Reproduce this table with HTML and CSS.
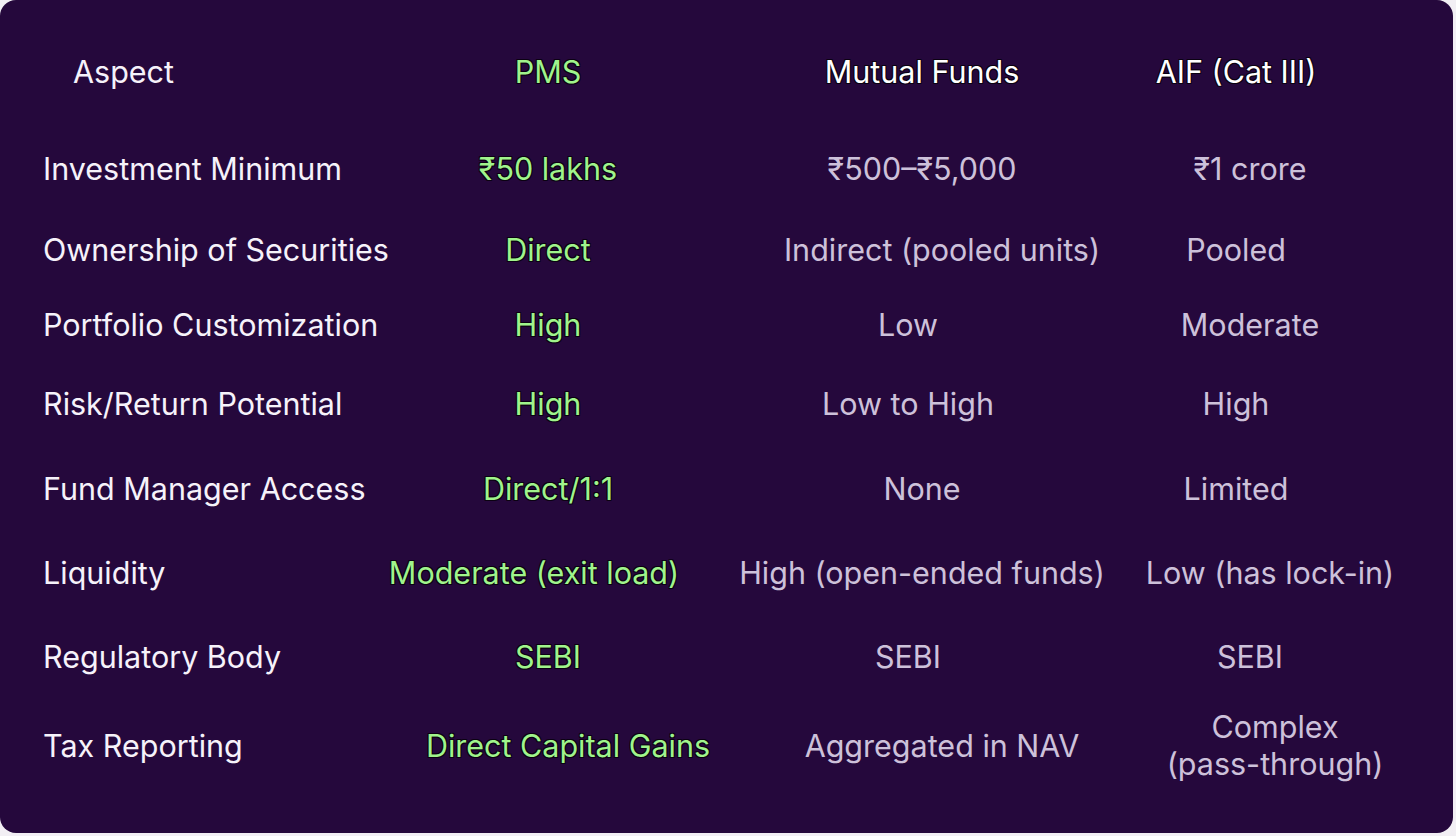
FILE: index.html
```html
<!DOCTYPE html>
<html lang="en">
<head>
<meta charset="utf-8">
<title>PMS vs Mutual Funds vs AIF</title>
<link rel="stylesheet" href="styles.css">
</head>
<body>
<div class="card">
  <div class="table">
    <div class="label head-label">Aspect</div>
    <div class="cell head green">PMS</div>
    <div class="cell head white">Mutual Funds</div>
    <div class="cell head white nudge-left">AIF (Cat III)</div>

    <div class="label">Investment Minimum</div>
    <div class="cell green">₹50 lakhs</div>
    <div class="cell gray">₹500–₹5,000</div>
    <div class="cell gray">₹1 crore</div>

    <div class="label">Ownership of Securities</div>
    <div class="cell green">Direct</div>
    <div class="cell gray nudge-right">Indirect (pooled units)</div>
    <div class="cell gray nudge-left">Pooled</div>

    <div class="label">Portfolio Customization</div>
    <div class="cell green">High</div>
    <div class="cell gray nudge-left">Low</div>
    <div class="cell gray">Moderate</div>

    <div class="label">Risk/Return Potential</div>
    <div class="cell green">High</div>
    <div class="cell gray nudge-left">Low to High</div>
    <div class="cell gray nudge-left">High</div>

    <div class="label">Fund Manager Access</div>
    <div class="cell green">Direct/1:1</div>
    <div class="cell gray">None</div>
    <div class="cell gray nudge-left">Limited</div>

    <div class="label">Liquidity</div>
    <div class="cell green nudge-left">Moderate (exit load)</div>
    <div class="cell gray">High (open-ended funds)</div>
    <div class="cell gray nudge-right">Low (has lock-in)</div>

    <div class="label">Regulatory Body</div>
    <div class="cell green">SEBI</div>
    <div class="cell gray nudge-left">SEBI</div>
    <div class="cell gray">SEBI</div>

    <div class="label">Tax Reporting</div>
    <div class="cell green nudge-right">Direct Capital Gains</div>
    <div class="cell gray nudge-right">Aggregated in NAV</div>
    <div class="cell gray multi">Complex<br>(pass-through)</div>
  </div>
</div>
</body>
</html>
```

FILE: styles.css
```css
* { box-sizing: border-box; }

html, body {
  margin: 0;
  padding: 0;
  background: #f2eff4;
}

body {
  width: 1456px;
  height: 836px;
  overflow: hidden;
  font-family: Inter, "Noto Sans", "DejaVu Sans", sans-serif;
}

.card {
  width: 1453px;
  height: 833px;
  background: #25083c;
  border-radius: 16px;
  padding: 52px 0 0 41px;
}

.table {
  display: grid;
  grid-template-columns: 359px 296px 452px 204px;
  grid-template-rows: 97px 81px 75px 79px 85px 84px 84px 89px 90px;
  align-items: start;
  font-size: 30.5px;
  line-height: 40px;
}

.label {
  color: #f6f2fa;
  white-space: nowrap;
  padding-left: 2px;
}

.head-label {
  padding-left: 32px;
}

.cell {
  justify-self: center;
  white-space: nowrap;
  text-align: center;
}

.nudge-left {
  margin-right: 28px;
}

.nudge-right {
  margin-left: 40px;
}

.multi {
  line-height: 37px;
  margin-top: -18px;
  padding-left: 50px;
}

.green {
  color: #a0f48c;
  text-shadow: 1px 1px 0 #0b0212, -1px -1px 0 #0b0212, 1px -1px 0 #0b0212, -1px 1px 0 #0b0212;
}

.white {
  color: #ffffff;
  text-shadow: 1px 1px 0 #0b0212, -1px -1px 0 #0b0212, 1px -1px 0 #0b0212, -1px 1px 0 #0b0212;
}

.gray {
  color: #cdc1da;
}
```
